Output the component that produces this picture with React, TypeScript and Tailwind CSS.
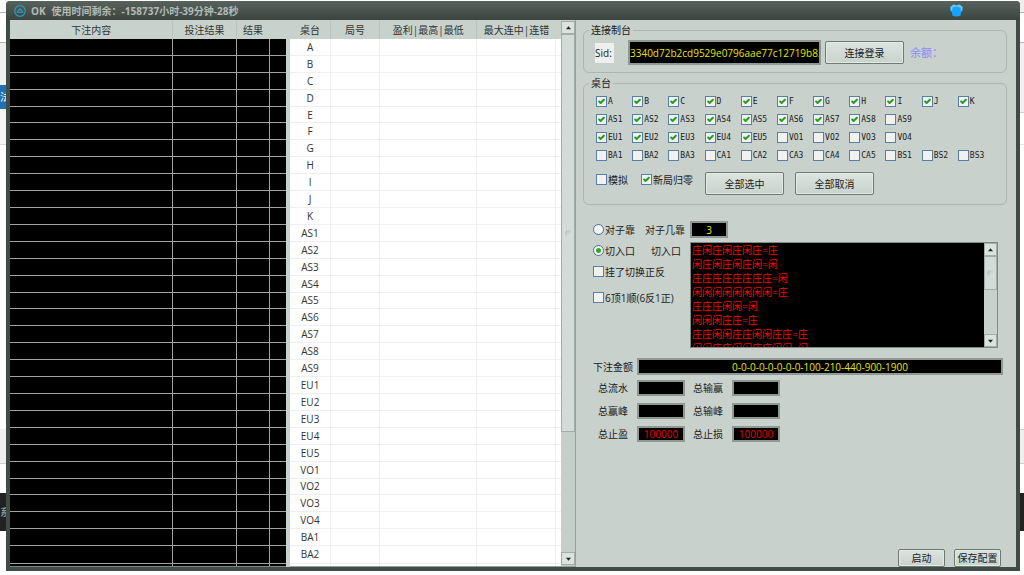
import { useState } from "react";
import { Check } from "lucide-react";

const tables = [
  "A", "B", "C", "D", "E", "F", "G", "H", "I", "J", "K",
  "AS1", "AS2", "AS3", "AS4", "AS5", "AS6", "AS7", "AS8", "AS9",
  "EU1", "EU2", "EU3", "EU4", "EU5",
  "VO1", "VO2", "VO3", "VO4",
  "BA1", "BA2",
];

const checkRows = [
  ["A", "B", "C", "D", "E", "F", "G", "H", "I", "J", "K"],
  ["AS1", "AS2", "AS3", "AS4", "AS5", "AS6", "AS7", "AS8", "AS9"],
  ["EU1", "EU2", "EU3", "EU4", "EU5", "VO1", "VO2", "VO3", "VO4"],
  ["BA1", "BA2", "BA3", "CA1", "CA2", "CA3", "CA4", "CA5", "BS1", "BS2", "BS3"],
];

const allTables = checkRows.flat();

const initialChecked = allTables.filter(
  (name) => name !== "AS9" && !/^(VO|BA|CA|BS)/.test(name)
);

const entryRules = [
  "庄闲庄闲庄闲庄=庄",
  "闲庄闲庄闲庄闲=闲",
  "庄庄庄庄庄庄庄庄=闲",
  "闲闲闲闲闲闲闲闲=庄",
  "庄庄庄闲闲=闲",
  "闲闲闲庄庄=庄",
  "庄庄闲闲庄庄闲闲庄庄=庄",
  "闲闲庄庄闲闲庄庄闲闲=闲",
].join("\n");

function CheckBox({ label, mono, checked, onChange }: {
  label: string;
  mono?: boolean;
  checked?: boolean;
  onChange?: () => void;
}) {
  const [own, setOwn] = useState(false);
  const on = checked ?? own;
  return (
    <label className="flex h-[11px] items-center gap-px whitespace-nowrap">
      <span className="relative h-[11px] w-[11px] shrink-0">
        <input
          type="checkbox"
          className="block h-[11px] w-[11px] appearance-none border border-[#5a7fa6] bg-[#f1f1ef]"
          checked={on}
          onChange={onChange ?? (() => setOwn(!own))}
        />
        {on && (
          <Check
            className="pointer-events-none absolute top-[2px] left-[2px] h-[7px] w-[7px] text-[#23a023]"
            strokeWidth={7}
          />
        )}
      </span>
      <span className={mono ? "font-['DejaVu_Sans_Mono',monospace] text-[8px]" : ""}>
        {label}
      </span>
    </label>
  );
}

function Radio({ label, defaultChecked }: { label: string; defaultChecked?: boolean }) {
  return (
    <label className="flex h-[11px] w-[52px] items-center gap-px whitespace-nowrap">
      <span className="relative h-[11px] w-[11px] shrink-0">
        <input
          type="radio"
          name="mode"
          defaultChecked={defaultChecked}
          className="peer block h-[11px] w-[11px] appearance-none rounded-full border border-[#4b7199] bg-[#f4f5f3]"
        />
        <span className="pointer-events-none absolute top-[3px] left-[3px] hidden h-[5px] w-[5px] rounded-full bg-[#2fa82f] peer-checked:block" />
      </span>
      {label}
    </label>
  );
}

function SkinButton({ children, className, onClick }: {
  children: string;
  className: string;
  onClick?: () => void;
}) {
  return (
    <button
      onClick={onClick}
      className={`shrink-0 rounded-xs border border-[#6f7974] bg-linear-to-b from-[#dbe4df] to-[#c9d3ce] text-center text-[10px] leading-3 whitespace-nowrap text-[#222] inset-ring inset-ring-[#e2eae6] ${className}`}
    >
      {children}
    </button>
  );
}

function ScrollArrow({ down }: { down?: boolean }) {
  return (
    <button
      aria-label={down ? "向下" : "向上"}
      className="flex h-[13px] w-full shrink-0 items-center justify-center border border-[#a3ada8] bg-[#dbe3df]"
    >
      <svg viewBox="0 0 6 4" className="h-[4px] w-[5px] fill-[#222]">
        <path d={down ? "M0 0.5h6L3 4z" : "M0 3.5h6L3 0z"} />
      </svg>
    </button>
  );
}

function Grip() {
  return (
    <span className="h-[7px] w-[7px] shrink-0 rounded-full bg-linear-to-br from-[#b3bdb8] to-[#e4ebe8]" />
  );
}

function Field({ id, label, value }: { id: string; label: string; value?: string }) {
  return (
    <div className="flex h-4 items-center">
      <label htmlFor={id} className="w-[39px] whitespace-nowrap">{label}</label>
      <input
        id={id}
        defaultValue={value}
        className="h-4 w-12 border-2 border-[#8f9994] bg-black text-center text-[10px] leading-3 text-[#f00000] outline-none"
      />
    </div>
  );
}

function LogTable() {
  return (
    <table className="h-full w-full table-fixed border-collapse bg-black text-[10px]">
      <colgroup>
        <col className="w-[59%]" />
        <col className="w-[23%]" />
        <col className="w-[12%]" />
        <col />
      </colgroup>
      <thead>
        <tr className="h-[19px] bg-[#c8d2cc] leading-4 text-[#333]">
          <th className="border-r border-[#bac3be] font-normal">下注内容</th>
          <th className="border-r border-[#bac3be] font-normal">投注结果</th>
          <th className="font-normal">结果</th>
          <th></th>
        </tr>
      </thead>
      <tbody>
        {tables.map((name) => (
          <tr key={name} className="border-b border-[#a3a3a3] leading-[14px]">
            <td className="border-r border-[#a3a3a3]">&nbsp;</td>
            <td className="border-r border-[#a3a3a3]"></td>
            <td className="border-r border-[#a3a3a3]"></td>
            <td></td>
          </tr>
        ))}
        <tr className="h-[3px]">
          <td className="border-r border-[#a3a3a3]"></td>
          <td className="border-r border-[#a3a3a3]"></td>
          <td className="border-r border-[#a3a3a3]"></td>
          <td></td>
        </tr>
      </tbody>
    </table>
  );
}

function StatsTable() {
  return (
    <table className="h-full w-full table-fixed border-collapse bg-white text-[10px] text-[#333]">
      <colgroup>
        <col className="w-[15%]" />
        <col className="w-[18%]" />
        <col className="w-[36%]" />
        <col className="w-[29%]" />
        <col />
      </colgroup>
      <thead>
        <tr className="h-[19px] bg-[#c8d2cc] leading-4 whitespace-nowrap">
          <th className="border-r border-[#bac3be] font-normal">桌台</th>
          <th className="border-r border-[#bac3be] font-normal">局号</th>
          <th className="border-r border-[#bac3be] font-normal">盈利|最高|最低</th>
          <th className="font-normal">最大连中|连错</th>
          <th></th>
        </tr>
      </thead>
      <tbody>
        {tables.map((name) => (
          <tr key={name} className="border-b border-[#efefef] text-center leading-[14px]">
            <td className="border-r border-[#efefef]">{name}</td>
            <td className="border-r border-[#efefef]"></td>
            <td className="border-r border-[#efefef]"></td>
            <td className="border-r border-[#efefef]"></td>
            <td></td>
          </tr>
        ))}
        <tr className="h-[3px]">
          <td className="border-r border-[#efefef]"></td>
          <td className="border-r border-[#efefef]"></td>
          <td className="border-r border-[#efefef]"></td>
          <td className="border-r border-[#efefef]"></td>
          <td></td>
        </tr>
      </tbody>
    </table>
  );
}

function App() {
  const [checked, setChecked] = useState<string[]>(initialChecked);
  const [reset, setReset] = useState(true);

  const toggle = (name: string) =>
    setChecked(
      checked.includes(name) ? checked.filter((n) => n !== name) : [...checked, name]
    );

  return (
    <div className="flex h-screen overflow-hidden bg-white font-['Open_Sans','Noto_Sans_CJK_SC',sans-serif] text-[10px] leading-3 text-[#1a1a1a]">
      {/* what shows of the desktop on the left */}
      <div className="w-[6px] shrink-0 overflow-hidden">
        <div className="h-[13px] border-b border-[#b5b5b5] bg-[#fafafa]" />
        <div className="h-[30px] border-b border-[#b5b5b5]" />
        <div className="h-[42px] bg-[#efefef]" />
        <div className="h-6 bg-[#1f70b5] leading-6 text-white">法</div>
        <div className="h-[36px] border-b border-[#d8d8d8] bg-[#f4f4f4]" />
        <div className="h-[284px]" />
        <div className="h-[35px] border-b border-[#cfcfcf] bg-[#efefef]" />
        <div className="h-[29px]" />
        <div className="h-[38px] bg-[#222] leading-[38px] text-[#aaa]">系</div>
      </div>

      <div className="mt-px mb-1 flex min-w-0 flex-1 flex-col rounded-t-sm border-b-4 border-[#414b46] bg-[#414b46]">
        <header className="flex h-[19px] shrink-0 items-center rounded-t-sm bg-linear-to-b from-[#59635d] to-[#3b443f] pr-[57px] pl-2 font-bold text-[#b3bab6]">
          <svg viewBox="0 0 12 12" className="mr-[5px] h-3 w-3 fill-none stroke-[#2c9abd]">
            <circle cx="6" cy="6" r="5.3" strokeWidth="1.2" />
            <path d="M2.8 7.6L6 3.8l3.2 3.8M4.5 7.4h3" strokeWidth="1.4" />
          </svg>
          <span>OK</span>
          <span className="ml-[6px]">使用时间剩余：</span>
          <span>-158737小时-39分钟-28秒</span>
          <svg viewBox="0 0 13 13" className="ml-auto h-[13px] w-[13px]">
            <path
              d="M3.5 0.6Q6.5 1.8 9.5 0.6L12.6 3 12.3 7.4 11 8 10.6 11.4Q6.5 13.4 2.4 11.4L2 8 0.7 7.4 0.4 3z"
              fill="#19a4fb"
            />
            <path
              d="M3.5 0.6Q6.5 1.8 9.5 0.6L12.6 3 12.3 6.5 10.8 6.8 10.4 3.6 6.5 2.4 2.6 3.6 2.2 6.8 0.7 6.5 0.4 3z"
              fill="#6cc4fa"
            />
          </svg>
        </header>

        <main className="mx-1 grid min-h-0 flex-1 grid-cols-[276fr_290fr_440fr] bg-[#c8d1cc]">
          <section className="h-full min-h-0 border-b border-[#7c8781]">
            <LogTable />
          </section>

          <section className="ml-1 flex min-h-0 border-r border-b border-[#98a29d]">
            <div className="min-w-0 flex-1">
              <StatsTable />
            </div>
            <div className="flex w-[14px] shrink-0 flex-col bg-[#c5cfca] py-px">
              <ScrollArrow />
              <div className="flex h-[398px] w-full items-center justify-center border border-[#a3ada8] bg-[#d3dcd8]">
                <Grip />
              </div>
              <div className="flex-1" />
              <ScrollArrow down />
            </div>
          </section>

          <section className="flex min-w-0 flex-col pt-1 pr-[9px] pl-[7px]">
            <fieldset className="min-w-0 rounded-md border border-[#adb7b2] pb-[7px]">
              <legend className="ml-[5px] px-[2px] leading-3">连接制台</legend>
              <div className="flex items-center pt-1 pl-[11px]">
                <label htmlFor="sid" className="mr-[14px] w-[19px] bg-[#efefef] leading-5 whitespace-nowrap">
                  Sid:
                </label>
                <input
                  id="sid"
                  defaultValue="3340d72b2cd9529e0796aae77c12719b83"
                  className="h-[25px] w-[193px] min-w-0 border-2 border-[#8f9994] bg-black text-[10px] text-[#e6e600] outline-none"
                />
                <SkinButton className="ml-1 h-[23px] w-[79px]">连接登录</SkinButton>
                <span className="ml-[6px] text-[11px] whitespace-nowrap text-[#8c8cf5]">余额：</span>
              </div>
            </fieldset>

            <fieldset className="mt-1 min-w-0 rounded-md border border-[#adb7b2] pb-[9px]">
              <legend className="ml-[5px] px-[2px] leading-3">桌台</legend>
              <div className="flex flex-col gap-[7px] pt-[7px] pr-3 pl-3">
                {checkRows.map((row) => (
                  <div key={row[0]} className="grid grid-cols-11">
                    {row.map((name) => (
                      <CheckBox
                        key={name}
                        mono
                        label={name}
                        checked={checked.includes(name)}
                        onChange={() => toggle(name)}
                      />
                    ))}
                  </div>
                ))}
              </div>
              <div className="mt-[11px] flex items-start pl-3">
                <div className="flex w-[109px] gap-[13px] pt-[2px]">
                  <CheckBox label="模拟" />
                  <CheckBox label="新局归零" checked={reset} onChange={() => setReset(!reset)} />
                </div>
                <SkinButton className="h-[23px] w-[79px]" onClick={() => setChecked(allTables)}>
                  全部选中
                </SkinButton>
                <SkinButton className="ml-[11px] h-[23px] w-[79px]" onClick={() => setChecked([])}>
                  全部取消
                </SkinButton>
              </div>
            </fieldset>

            <div className="mt-4 flex items-center pl-[10px]">
              <Radio label="对子靠" />
              <label htmlFor="pairs" className="w-[45px] whitespace-nowrap">对子几靠</label>
              <input
                id="pairs"
                defaultValue="3"
                className="h-[17px] w-[38px] border-2 border-[#8f9994] bg-black text-center text-[10px] text-[#e6e600] outline-none"
              />
            </div>

            <div className="mt-1 flex pr-[9px] pl-[10px]">
              <div className="w-[97px] shrink-0 pt-[3px]">
                <div className="flex h-[11px] items-center gap-[6px]">
                  <Radio label="切入口" defaultChecked />
                  <label htmlFor="rules">切入口</label>
                </div>
                <div className="mt-[10px]">
                  <CheckBox label="挂了切换正反" />
                </div>
                <div className="mt-[15px]">
                  <CheckBox label="6顶1顺(6反1正)" />
                </div>
              </div>
              <div className="flex h-[106px] min-w-0 flex-1 border border-[#7f8a85]">
                <textarea
                  id="rules"
                  defaultValue={entryRules}
                  className="min-w-0 flex-1 resize-none overflow-hidden bg-black px-px text-[10px] leading-[14px] text-[#ff0000] outline-none"
                />
                <div className="flex w-[13px] shrink-0 flex-col bg-[#c8d1cc]">
                  <ScrollArrow />
                  <div className="flex h-[34px] items-center justify-center border border-[#a3ada8] bg-[#d3dcd8]">
                    <Grip />
                  </div>
                  <div className="flex-1" />
                  <ScrollArrow down />
                </div>
              </div>
            </div>

            <div className="mt-[10px] flex items-center pr-1 pl-[10px]">
              <label htmlFor="amounts" className="w-11 shrink-0 whitespace-nowrap">下注金额</label>
              <input
                id="amounts"
                defaultValue="0-0-0-0-0-0-0-0-100-210-440-900-1900"
                className="h-[17px] min-w-0 flex-1 border-2 border-[#8f9994] bg-black text-center text-[10px] text-[#e6e600] outline-none"
              />
            </div>

            <div className="mt-[5px] grid grid-cols-[87px_87px] gap-x-2 gap-y-[7px] pl-[15px]">
              <Field id="flow" label="总流水" />
              <Field id="net" label="总输赢" />
              <Field id="win-peak" label="总赢峰" />
              <Field id="loss-peak" label="总输峰" />
              <Field id="take-profit" label="总止盈" value="100000" />
              <Field id="stop-loss" label="总止损" value="100000" />
            </div>

            <div className="mt-auto flex justify-end gap-[9px] pr-[6px]">
              <SkinButton className="h-[18px] w-[47px]">启动</SkinButton>
              <SkinButton className="h-[18px] w-[47px]">保存配置</SkinButton>
            </div>
          </section>
        </main>
      </div>

      {/* and on the right */}
      <div className="w-1 shrink-0">
        <div className="h-[13px] border-b border-[#b5b5b5] bg-[#efefef]" />
        <div className="h-[30px] border-b border-[#b5b5b5]" />
        <div className="h-[70px] border-b border-[#cfcfcf] bg-[#f3eff2]" />
        <div className="h-8 border-b border-[#e4e4e4]" />
        <div className="h-[284px]" />
        <div className="h-[35px] border-y border-[#cfcfcf] bg-[#efefef]" />
        <div className="h-[29px]" />
        <div className="h-[38px] bg-[#222]" />
      </div>
    </div>
  );
}

export default App;
